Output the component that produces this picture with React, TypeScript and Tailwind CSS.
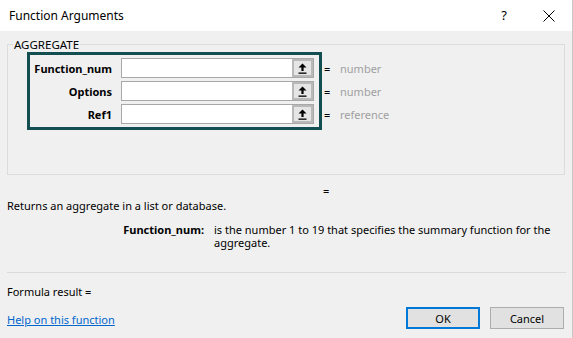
import React from 'react';

interface ArgRow {
  name: string;
  hint: string;
}

const args: ArgRow[] = [
  { name: 'Function_num', hint: 'number' },
  { name: 'Options', hint: 'number' },
  { name: 'Ref1', hint: 'reference' },
];

// little "collapse dialog" button at the end of each argument box
const RefButton: React.FC = () => (
  <div className="w-[21px] h-full border-2 border-[#b9b9b9] bg-[#e5e5e5] flex items-center justify-center">
    <svg width="9" height="11" viewBox="0 0 9 11">
      <path d="M4.5 0.5 L8.5 4.5 L5.6 4.5 L5.6 8 L3.4 8 L3.4 4.5 L0.5 4.5 Z" fill="#000" />
      <rect x="0.5" y="9.5" width="8" height="1.3" fill="#000" />
    </svg>
  </div>
);

const App: React.FC = () => {
  return (
    <div
      className="w-[573px] h-[338px] bg-[#f0f0f0] text-[11px] text-black border-r border-[#c8c8c8] overflow-hidden"
      style={{ fontFamily: '"Noto Sans", "Liberation Sans", sans-serif' }}
    >
      {/* title bar */}
      <div className="h-[31px] bg-white flex items-center justify-between pl-[9px] pr-[17px]">
        <span className="text-[12px] leading-none">Function Arguments</span>
        <div className="flex items-center gap-[36px]">
          <span className="text-[13px] leading-none">?</span>
          <svg width="12" height="12" viewBox="0 0 12 12">
            <path d="M0.5 0.5 L11.5 11.5 M11.5 0.5 L0.5 11.5" stroke="#000" strokeWidth="1" />
          </svg>
        </div>
      </div>

      <div className="px-[7px]">
        {/* group box */}
        <fieldset className="mt-[7px] h-[137px] w-[558px] border border-[#dcdcdc]">
          <legend className="ml-[5px] px-[1px] leading-[13px] text-[11.5px]">AGGREGATE</legend>
          <div className="flex mt-[1px] ml-[19px]">
            <div className="w-[295px] border-[3px] border-[#134e50] pt-[3px] pb-[3px] pr-[5px] flex flex-col gap-[3px]">
              {args.map((a) => (
                <div key={a.name} className="flex items-center h-[20px]">
                  <div className="w-[82px] text-right font-bold leading-none">{a.name}</div>
                  <div className="ml-[9px] flex-1 h-[20px] bg-white border border-[#a8a8a8] flex justify-end">
                    <RefButton />
                  </div>
                </div>
              ))}
            </div>
            <div className="pt-[6px] flex flex-col gap-[3px] ml-[2px]">
              {args.map((a) => (
                <div key={a.name} className="flex items-center h-[20px]">
                  <span className="w-[16px] leading-none">=</span>
                  <span className="text-[#a0a0a0] leading-none">{a.hint}</span>
                </div>
              ))}
            </div>
          </div>
        </fieldset>

        <div className="h-[14px] mt-[8px] flex items-center pl-[316px] leading-none">=</div>

        <div className="h-[14px] mt-px flex items-center leading-none">
          Returns an aggregate in a list or database.
        </div>

        <div className="mt-[11px] flex leading-[13px]">
          <div className="w-[197px] text-right font-bold">Function_num:</div>
          <div className="ml-[10px] w-[346px]">
            is the number 1 to 19 that specifies the summary function for the aggregate.
          </div>
        </div>

        <div className="mt-[23px] h-px bg-[#dadada] w-[559px]" />

        <div className="mt-[11px] h-[14px] flex items-center leading-none">Formula result =</div>

        <div className="mt-[9px] flex items-center justify-between pr-[1px]">
          <a href="#" className="text-[#0066cc] underline leading-none mt-[2px]">
            Help on this function
          </a>
          <div className="flex gap-[10px]">
            <button className="w-[74px] h-[22px] bg-[#e1e1e1] border-2 border-[#0078d7] leading-none">
              OK
            </button>
            <button className="w-[74px] h-[22px] bg-[#e1e1e1] border border-[#adadad] leading-none">
              Cancel
            </button>
          </div>
        </div>
      </div>
    </div>
  );
};

export default App;
